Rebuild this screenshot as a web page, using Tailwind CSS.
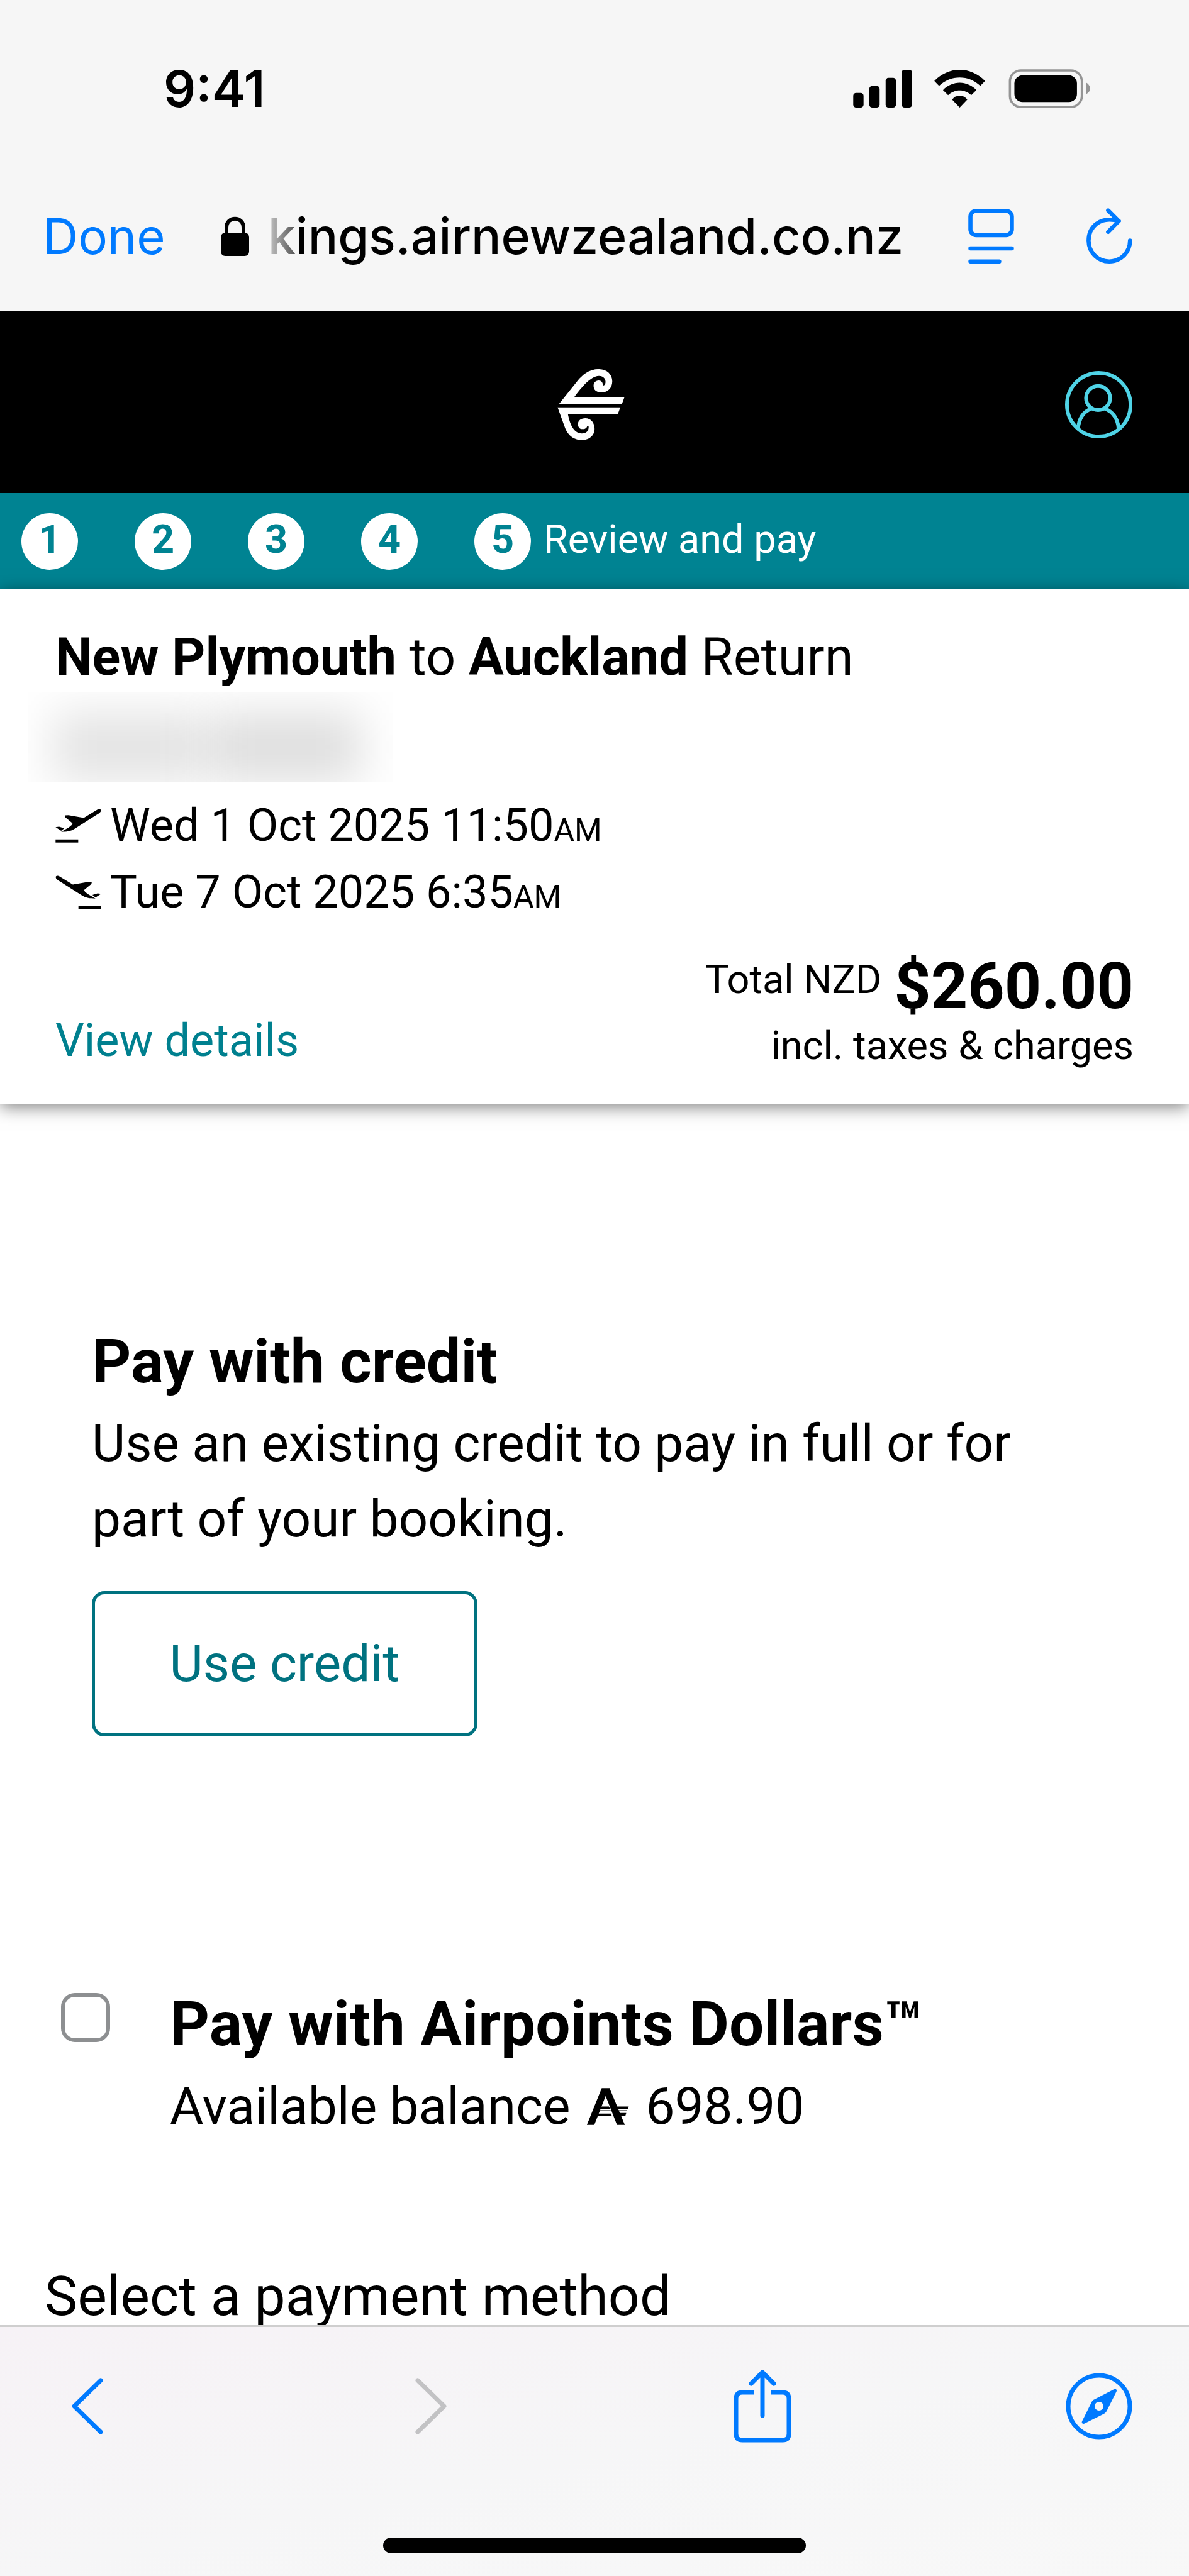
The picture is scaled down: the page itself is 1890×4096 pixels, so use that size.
<!DOCTYPE html>
<html lang="en">

<head>
  <meta charset="UTF-8">
  <meta name="viewport" content="width=device-width, initial-scale=1.0">
  <title>Review and pay</title>
  <script src="https://cdn.jsdelivr.net/npm/@tailwindcss/browser@4"></script>
</head>

<body class="bg-white text-black font-['Roboto','Liberation_Sans',sans-serif]">
  <div class="min-h-screen flex flex-col">

    <!-- Browser top bar -->
    <header class="bg-[#f6f6f6] pb-[26px] font-['Inter','Liberation_Sans',sans-serif]">
      <div class="h-[282px] pl-[260px] pr-[157px] flex items-center justify-between">
        <span class="text-[80px] font-semibold">9:41</span>
        <div class="flex items-center">
          <svg class="w-[94px] h-[60px]" viewBox="0 0 285 183">
            <rect x="0" y="112" width="50" height="71" rx="14" />
            <rect x="78" y="78" width="50" height="105" rx="14" />
            <rect x="157" y="39" width="50" height="144" rx="14" />
            <rect x="235" y="0" width="50" height="183" rx="14" />
          </svg>
          <svg class="w-[81px] h-[60px] ml-[35px]" viewBox="507 95 246 183">
            <path d="M507 149C577 77 683 77 753 149L730 173C673 119 587 119 530 173Z" />
            <path d="M549 193C596 146 664 146 711 193L686 218C654 187 606 187 574 218Z" />
            <path d="M593 239C615 214 645 214 667 239L630 278Z" />
          </svg>
          <svg class="w-[130px] h-[62px] ml-[37px]" viewBox="863 91 400 192">
            <rect x="869" y="97" width="354" height="180" rx="54" fill="none" stroke="#959595" stroke-width="11" />
            <rect x="891" y="121" width="308" height="132" rx="40" />
            <path fill="#959595" d="M1243 157C1270 170 1270 203 1243 214Z" />
          </svg>
        </div>
      </div>
      <div class="h-[186px] pl-[68px] pr-[90px] flex items-center">
        <button class="text-[78px] text-[#007aff]">Done</button>
        <svg class="w-[45px] h-[63px] ml-[88px]" viewBox="0 0 45 63">
          <path fill="none" stroke="#000" stroke-width="6" d="M9 30V18C9 -1 36 -1 36 18V30" />
          <rect x="0" y="26" width="45" height="37" rx="7" />
        </svg>
        <span class="ml-[30px] text-[79px] font-medium whitespace-nowrap"><span
            class="bg-linear-to-r from-[#c8c8c8] to-[#555] bg-clip-text text-transparent">k</span>ings.airnewzealand.co.nz</span>
        <button class="ml-auto" aria-label="Page settings">
          <svg class="w-[73px] h-[87px]" viewBox="0 0 220 264" fill="none" stroke="#007aff" stroke-width="20"
            stroke-linecap="round">
            <rect x="10" y="10" width="200" height="117" rx="28" />
            <path d="M10 191H210M10 254H149" />
          </svg>
        </button>
        <button class="ml-[115px]" aria-label="Reload">
          <svg class="w-[73px] h-[88px]" viewBox="0 0 220 266" fill="none" stroke="#007aff" stroke-width="20"
            stroke-linecap="round" stroke-linejoin="round">
            <path d="M155 62C60 35 10 95 10 156C10 212 54 256 109 256C165 256 209 212 209 156" />
            <path d="M104 11L155 62L104 114" />
          </svg>
        </button>
      </div>
    </header>

    <!-- Site header -->
    <div class="bg-black h-[290px] pt-2 px-[90px] grid grid-cols-[1fr_auto_1fr] items-center">
      <a class="col-start-2" href="#" aria-label="Air New Zealand">
        <svg class="w-[119px] h-[113px]" viewBox="150 103 362 346" fill="#fff">
          <path
            d="M157 272L255 150C285 118 315 102 352 103C390 104 416 128 416 162C416 195 395 216 362 216C340 216 325 204 325 184C325 170 334 158 350 158C363 158 371 168 370 182C377 184 382 178 383 168C385 150 371 135 350 136C310 138 268 190 230 240H475L463 272Z" />
          <path
            d="M150 289H455L443 322H200C208 362 225 416 268 416C290 416 302 402 301 383C300 380 296 379 294 380C292 390 282 396 270 395C256 394 249 384 249 370C249 354 264 342 284 342C312 342 330 364 330 394C330 425 305 448 270 448C215 448 193 410 183 380Z" />
        </svg>
      </a>
      <button class="justify-self-end" aria-label="Account">
        <svg class="w-[107px] h-[107px]" viewBox="180 121 324 324" fill="none" stroke="#4fd3e6" stroke-width="18">
          <circle cx="342" cy="283" r="153" />
          <circle cx="339" cy="251" r="58" />
          <path d="M242 402C246 345 270 315 308 301M370 301C408 315 436 350 438 402" />
        </svg>
      </button>
    </div>

    <!-- Booking steps -->
    <ol class="bg-[#008392] h-[153px] pl-[34px] flex items-center gap-[90px] text-[63px] text-white">
      <li class="size-[90px] rounded-full bg-white text-[#008392] font-bold leading-[84px] text-center">1</li>
      <li class="size-[90px] rounded-full bg-white text-[#008392] font-bold leading-[84px] text-center">2</li>
      <li class="size-[90px] rounded-full bg-white text-[#008392] font-bold leading-[84px] text-center">3</li>
      <li class="size-[90px] rounded-full bg-white text-[#008392] font-bold leading-[84px] text-center">4</li>
      <li class="flex gap-[20px] leading-[84px]">
        <span class="size-[90px] rounded-full bg-white text-[#008392] font-bold text-center">5</span>
        Review and pay
      </li>
    </ol>

    <!-- Trip summary -->
    <section class="relative bg-white pt-[53px] pb-[52px] px-[88px] shadow-[0_5px_26px_rgba(0,0,0,0.5)]">
      <h1 class="text-[83px] leading-[110px]"><b>New Plymouth</b> to <b>Auckland</b> Return</h1>
      <div class="-ml-[44px] w-[580px] h-[143px] overflow-hidden flex items-end gap-[10px] pl-[40px]">
        <span class="w-[240px] h-[110px] bg-black/11 blur-[36px]"></span>
        <span class="w-[240px] h-[110px] bg-black/13 blur-[36px]"></span>
      </div>
      <div class="mt-[17px] text-[72px] leading-[106px]">
        <p class="flex items-center gap-[14px]">
          <svg class="w-[73px] h-[54px]" viewBox="55 85 221 165">
            <path
              d="M100 117L118 116L192 129L256 90C268 83 280 88 273 100C268 107 258 112 250 117L148 182C130 194 108 197 82 197L120 175C132 166 138 160 137 155L102 126Z" />
            <path d="M55 174L72 172L97 180L82 192Z" />
            <rect x="55" y="234" width="110" height="15" />
          </svg>
          <span>Wed 1 Oct 2025 11:50<span class="text-[50px] leading-none">AM</span></span>
        </p>
        <p class="flex items-center gap-[14px]">
          <svg class="w-[73px] h-[54px] -scale-x-100" viewBox="55 85 221 165">
            <path
              d="M100 117L118 116L192 129L256 90C268 83 280 88 273 100C268 107 258 112 250 117L148 182C130 194 108 197 82 197L120 175C132 166 138 160 137 155L102 126Z" />
            <path d="M55 174L72 172L97 180L82 192Z" />
            <rect x="55" y="234" width="110" height="15" />
          </svg>
          <span>Tue 7 Oct 2025 6:35<span class="text-[50px] leading-none">AM</span></span>
        </p>
      </div>
      <div class="mt-[41px] flex items-end justify-between">
        <a href="#" class="text-[72px] leading-[96px] text-[#00808f]">View details</a>
        <div class="text-right text-[63px]">
          <p class="flex justify-end gap-[20px] leading-[90px]">
            Total NZD <b class="text-[102px] leading-[110px]">$260.00</b>
          </p>
          <p class="leading-[80px]">incl. taxes &amp; charges</p>
        </div>
      </div>
    </section>

    <!-- Payment options -->
    <main class="grow">
      <section class="mt-[350px] px-[146px]">
        <h2 class="text-[97px] leading-[120px] font-bold">Pay with credit</h2>
        <p class="mt-[10px] text-[82px] leading-[120px]">Use an existing credit to pay in full or for<br>part of your
          booking.</p>
        <button
          class="mt-[55px] w-[613px] h-[231px] border-[5px] border-[#007280] rounded-[20px] text-[82px] text-[#007280]">Use
          credit</button>
      </section>

      <section class="mt-[398px] pl-[97px] flex items-start">
        <input id="airpoints" type="checkbox"
          class="appearance-none size-[78px] mt-[10px] mr-[95px] border-[6px] border-[#8d8f91] rounded-[22px] bg-white">
        <div>
          <label for="airpoints" class="block text-[98px] leading-[120px] font-bold">Pay with Airpoints Dollars™</label>
          <p class="mt-[10px] flex items-center gap-[26px] text-[82px] leading-[120px]">
            Available balance
            <svg class="w-[68px] h-[59px]" viewBox="88 93 206 180">
              <path d="M90 272L162 94H196L126 272ZM166 94H200L274 272H236Z" />
              <path d="M146 183H197L203 196H141ZM140 201H205L208 206H138ZM133 217H206L212 230H128Z" />
              <path d="M232 183H293L288 196H236ZM240 201H284L281 206H242ZM246 214H281L276 230H250Z" />
            </svg>
            698.90
          </p>
        </div>
      </section>

      <h3 class="mt-[196px] pl-[71px] text-[88px] leading-[92px]">Select a payment method</h3>
    </main>

    <!-- Browser toolbar -->
    <footer
      class="relative border-t-[3px] border-[#cfcfcf] bg-linear-to-br from-[#f6f2f6] via-[#f6f6f7] to-[#f8f8f8] pt-[68px] pb-[36px]">
      <nav class="pl-[114px] pr-[90px] flex items-center justify-between">
        <button class="w-[109px]" aria-label="Back">
          <svg class="w-[50px] h-[90px]" viewBox="0 0 50 90" fill="none" stroke="#007aff" stroke-width="7"
            stroke-linecap="round" stroke-linejoin="round">
            <path d="M46 4L4 45L46 86" />
          </svg>
        </button>
        <button class="w-[70px]" aria-label="Forward">
          <svg class="w-[50px] h-[90px]" viewBox="0 0 50 90" fill="none" stroke="#c2c2c4" stroke-width="7"
            stroke-linecap="round" stroke-linejoin="round">
            <path d="M4 4L46 45L4 86" />
          </svg>
        </button>
        <button aria-label="Share">
          <svg class="w-[92px] h-[116px]" viewBox="0 0 92 116" fill="none" stroke="#007aff" stroke-width="7"
            stroke-linecap="round" stroke-linejoin="round">
            <path stroke-linecap="butt" d="M33 36H14Q4 36 4 46V102Q4 112 14 112H78Q88 112 88 102V46Q88 36 78 36H59" />
            <path d="M46 73V4M28 22L46 4L64 22" />
          </svg>
        </button>
        <button aria-label="Open in browser">
          <svg class="w-[105px] h-[105px]" viewBox="0 0 105 105">
            <circle cx="52" cy="52" r="49" fill="none" stroke="#007aff" stroke-width="7" />
            <path fill="#007aff" fill-rule="evenodd"
              d="M79 25Q81 27 79 30L64 60Q63 62 60 64L30 79Q27 81 25 79Q24 77 26 74L41 44Q42 42 45 41L74 26Q77 24 79 25ZM52 45A7 7 0 1 0 52 59A7 7 0 1 0 52 45Z" />
          </svg>
        </button>
      </nav>
      <div class="mt-[151px] mx-auto w-[672px] h-[25px] rounded-full bg-black"></div>
    </footer>
  </div>
</body>

</html>
